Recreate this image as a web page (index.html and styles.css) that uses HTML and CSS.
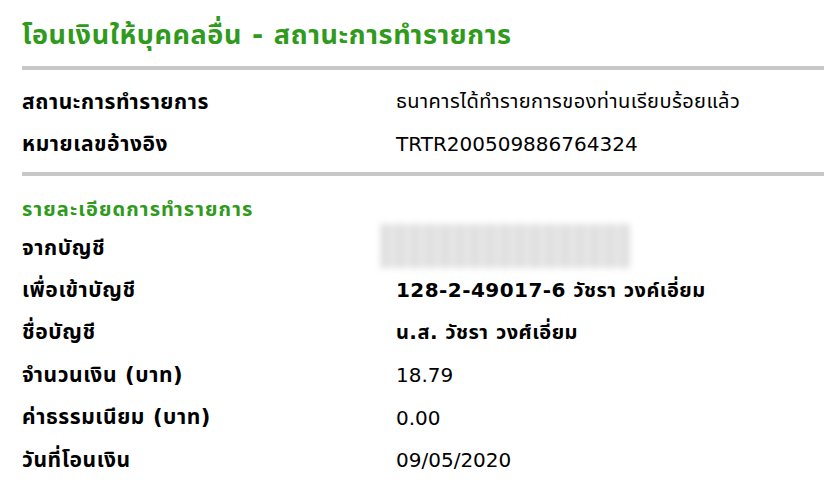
FILE: index.html
```html
<!DOCTYPE html>
<html lang="th">
<head>
  <meta charset="UTF-8">
  <title>โอนเงินให้บุคคลอื่น - สถานะการทำรายการ</title>
  <link rel="stylesheet" href="styles.css">
</head>
<body>
  <div class="page">
    <h1 class="page-title">โอนเงินให้บุคคลอื่น - สถานะการทำรายการ</h1>
    <div class="divider"></div>

    <div class="status">
      <div class="row">
        <div class="row-label">สถานะการทำรายการ</div>
        <div class="row-value row-value-th">ธนาคารได้ทำรายการของท่านเรียบร้อยแล้ว</div>
      </div>
      <div class="row">
        <div class="row-label">หมายเลขอ้างอิง</div>
        <div class="row-value">TRTR200509886764324</div>
      </div>
    </div>
    <div class="divider"></div>

    <h2 class="section-title">รายละเอียดการทำรายการ</h2>
    <div class="detail">
      <div class="row">
        <div class="row-label">จากบัญชี</div>
        <div class="row-value"><div class="masked"></div></div>
      </div>
      <div class="row">
        <div class="row-label">เพื่อเข้าบัญชี</div>
        <div class="row-value row-value-th"><b>128-2-49017-6 วัชรา วงค์เอี่ยม</b></div>
      </div>
      <div class="row">
        <div class="row-label">ชื่อบัญชี</div>
        <div class="row-value row-value-th"><b>น.ส. วัชรา วงศ์เอี่ยม</b></div>
      </div>
      <div class="row">
        <div class="row-label">จำนวนเงิน (บาท)</div>
        <div class="row-value">18.79</div>
      </div>
      <div class="row">
        <div class="row-label">ค่าธรรมเนียม (บาท)</div>
        <div class="row-value">0.00</div>
      </div>
      <div class="row">
        <div class="row-label">วันที่โอนเงิน</div>
        <div class="row-value">09/05/2020</div>
      </div>
    </div>
  </div>
</body>
</html>
```

FILE: styles.css
```css
body {
  margin: 0;
  background: #fff;
  font-family: "DejaVu Sans", "Noto Sans Thai", "Noto Sans", sans-serif;
  color: #000;
}

.page {
  padding-left: 22px;
}

.page-title {
  margin: 0;
  padding-top: 20px;
  height: 66px;
  box-sizing: border-box;
  font-size: 27px;
  line-height: 30px;
  letter-spacing: 0.6px;
  font-weight: bold;
  color: #2f9a1c;
}

.divider {
  height: 4px;
  background: #c8c8c8;
}

.status {
  padding: 11px 0 7px;
}

.row {
  display: flex;
  align-items: center;
  height: 42px;
  font-size: 20px;
}

.detail .row {
  height: 42.4px;
}

.row-label {
  width: 374px;
  font-size: 21px;
  letter-spacing: 0.6px;
  font-weight: bold;
}

/* thai glyphs run narrower than the original font */
.row-value-th {
  letter-spacing: 0.45px;
}

.section-title {
  margin: 0;
  padding-top: 22px;
  height: 51px;
  box-sizing: border-box;
  font-size: 20px;
  line-height: 22px;
  letter-spacing: 1.1px;
  font-weight: bold;
  color: #2f9a1c;
}

.masked {
  margin: -4px 0 0 -16px;
  width: 250px;
  height: 44px;
  background: repeating-linear-gradient(90deg, #e6e6e6 0, #dcdcdc 6px, #e9e9e9 11px, #e3e3e3 15px);
  filter: blur(3px);
}
```
